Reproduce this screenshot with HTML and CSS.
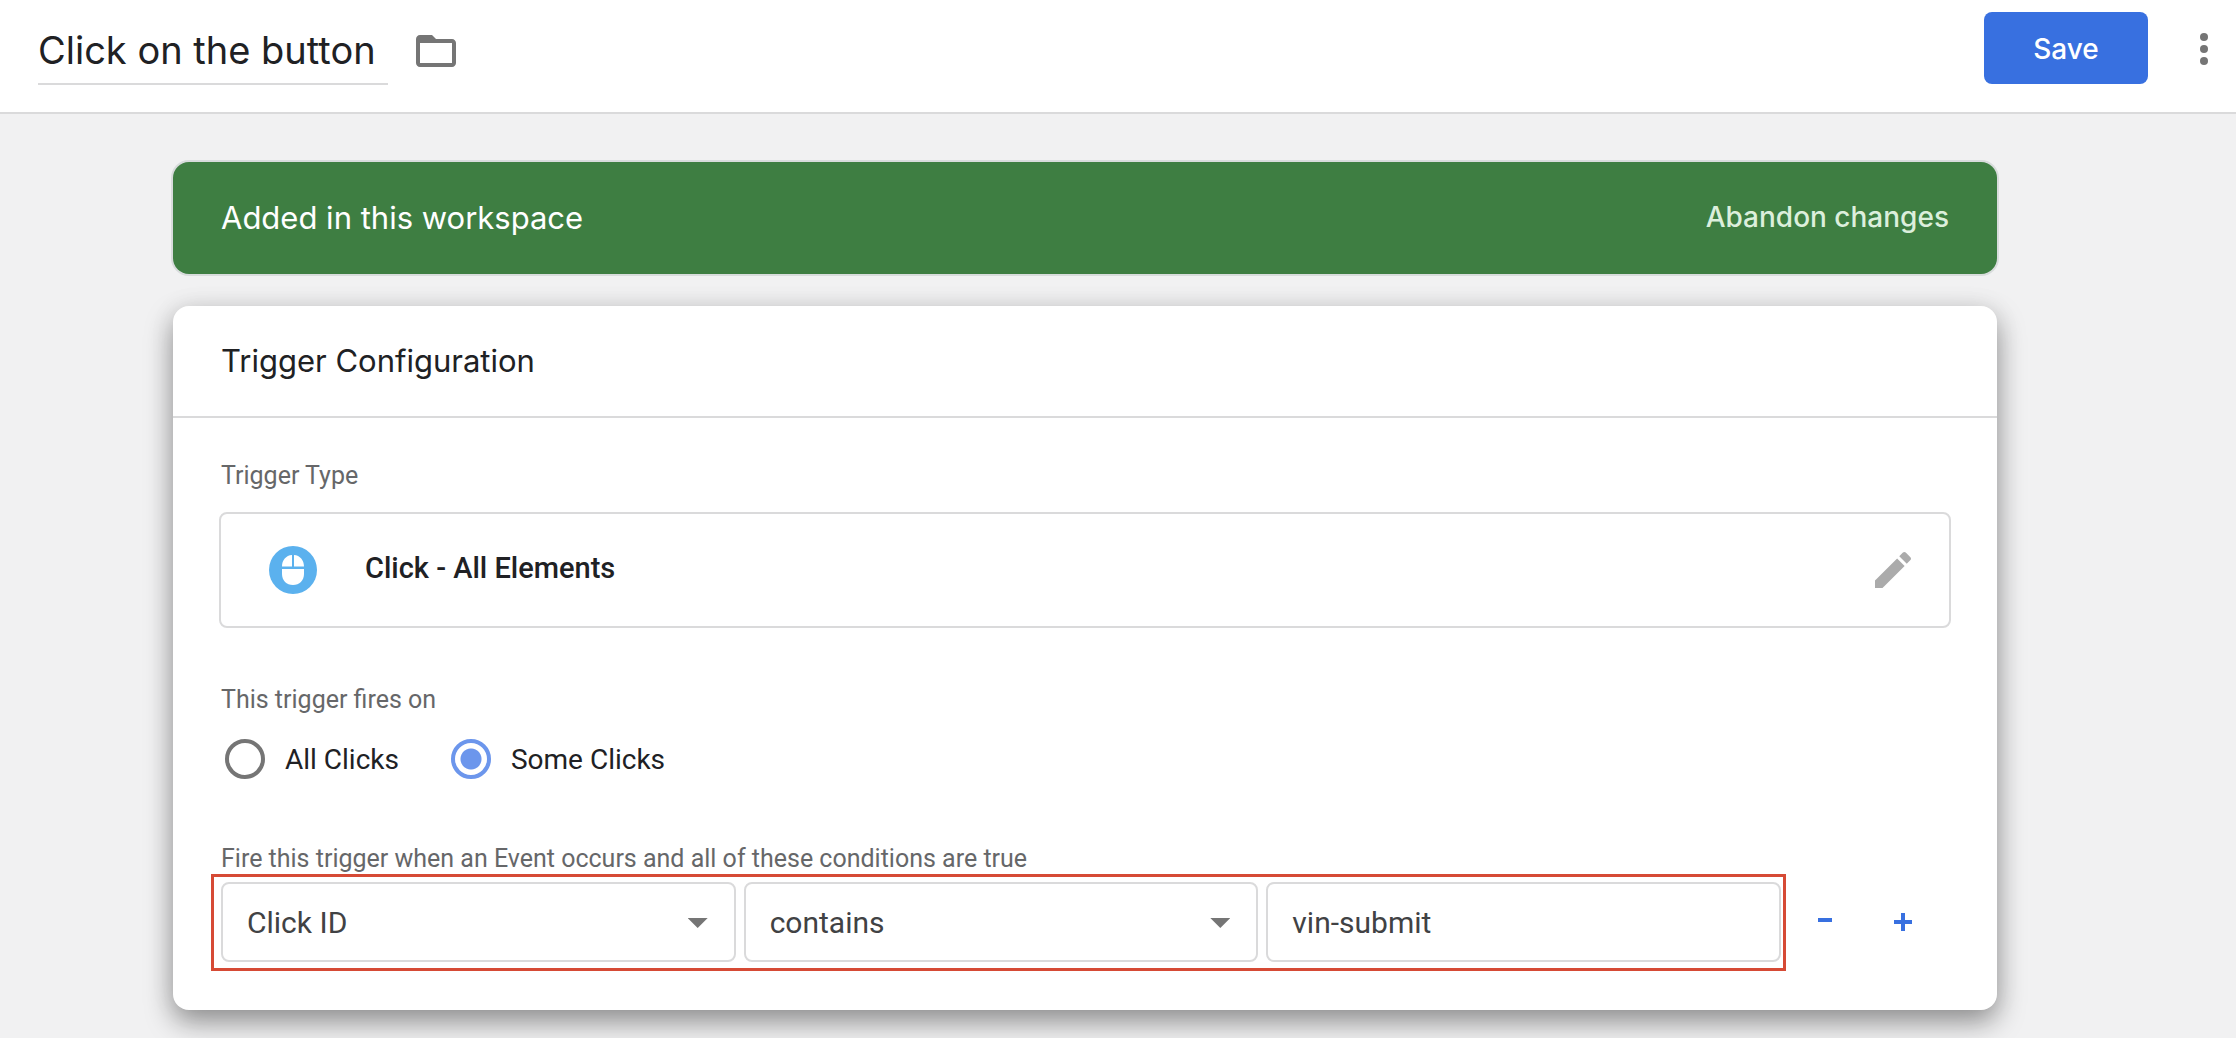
FILE: index.html
```html
<!DOCTYPE html>
<html lang="en">
<head>
<meta charset="utf-8">
<title>Click on the button</title>
<link rel="stylesheet" href="styles.css">
</head>
<body>
<header class="topbar">
  <input class="trigger-name" type="text" value="Click on the button" aria-label="Trigger name">
  <button class="icon-button folder" type="button" aria-label="Folder">
    <svg width="48" height="48" viewBox="0 0 24 24" fill="#757575"><path d="M20 6h-8l-2-2H4c-1.100 0-1.990.9-1.990 2L2 18c0 1.100.9 2 2 2h16c1.100 0 2-.9 2-2V8c0-1.100-.9-2-2-2zm0 12H4V8h16v10z"/></svg>
  </button>
  <button class="save" type="button">Save</button>
  <button class="icon-button" type="button" aria-label="More actions">
    <svg width="48" height="48" viewBox="0 0 24 24" fill="#757575"><circle cx="12" cy="6" r="2"/><circle cx="12" cy="12" r="2"/><circle cx="12" cy="18" r="2"/></svg>
  </button>
</header>
<main class="content">
  <div class="banner">
    <span class="banner-text">Added in this workspace</span>
    <button class="abandon" type="button">Abandon changes</button>
  </div>
  <section class="card">
    <h2 class="card-title">Trigger Configuration</h2>
    <div class="card-body">
      <p class="label">Trigger Type</p>
      <div class="type-box">
        <svg width="48" height="48" viewBox="0 0 48 48"><circle cx="24" cy="24" r="24" fill="#5bb1ee"/><path fill="#fff" d="M23 9v11.500H13C13 14 17 9.500 23 9zM25 9c6 .5 10 5 10 11.500H25zM13 23h22v5c0 6.500-4.500 11-11 11s-11-4.500-11-11z"/></svg>
        <span class="type-name">Click - All Elements</span>
        <button class="icon-button" type="button" aria-label="Edit trigger type">
          <svg width="48" height="48" viewBox="0 0 24 24" fill="#ababab"><path d="M3 17.250V21h3.750L17.810 9.940l-3.750-3.750L3 17.250zM20.710 7.040c.39-.39.39-1.020 0-1.410l-2.340-2.340c-.39-.39-1.020-.39-1.410 0l-1.830 1.830 3.750 3.750 1.830-1.830z"/></svg>
        </button>
      </div>
      <fieldset class="fires-on">
        <legend class="label">This trigger fires on</legend>
        <div class="radios">
          <label class="radio"><input type="radio" name="fires">All Clicks</label>
          <label class="radio"><input type="radio" name="fires" checked>Some Clicks</label>
        </div>
      </fieldset>
      <p class="label">Fire this trigger when an Event occurs and all of these conditions are true</p>
      <div class="condition">
        <div class="fields">
          <div class="select"><select aria-label="Variable"><option>Click ID</option></select></div>
          <div class="select"><select aria-label="Operator"><option>contains</option></select></div>
          <input class="value" type="text" value="vin-submit" aria-label="Value">
        </div>
        <button class="adjust" type="button" aria-label="Remove condition">
          <svg width="20" height="20" viewBox="0 0 20 20" fill="#3870e0"><path d="M3 5h14v4H3z"/></svg>
        </button>
        <button class="adjust" type="button" aria-label="Add condition">
          <svg width="20" height="20" viewBox="0 0 20 20" fill="#3870e0"><path d="M8 0h4v7h7v4h-7v7H8v-7H1V7h7z"/></svg>
        </button>
      </div>
    </div>
  </section>
</main>
</body>
</html>
```
FILE: styles.css
```css
* {
  box-sizing: border-box;
}

body {
  margin: 0;
  background: #f1f1f2;
  color: #202124;
  font-family: Roboto, "Liberation Sans", sans-serif;
  font-size: 28px;
}

button,
input,
select {
  margin: 0;
  padding: 0;
  border: 0;
  background: none;
  color: inherit;
  font: inherit;
}

svg {
  display: block;
}

.topbar {
  display: flex;
  align-items: flex-start;
  height: 114px;
  padding: 12px 8px 0 38px;
  border-bottom: 2px solid #dadadb;
  background: #fff;
}

.trigger-name {
  width: 350px;
  height: 73px;
  padding-top: 4px;
  border-bottom: 2px solid #dadadb;
  font-family: Inter, sans-serif;
  font-size: 38px;
}

.icon-button {
  width: 48px;
  height: 48px;
}

.topbar .icon-button {
  margin-top: 13px;
}

.topbar .folder {
  margin-top: 15px;
  margin-left: 24px;
}

.save {
  width: 164px;
  height: 72px;
  margin-right: 32px;
  margin-left: auto;
  padding-top: 2px;
  border-radius: 8px;
  background: #3870e0;
  color: #fff;
  font-family: Inter, sans-serif;
  font-weight: 500;
}

.content {
  padding: 48px 239px 28px 173px;
}

.banner {
  display: flex;
  align-items: center;
  justify-content: space-between;
  height: 112px;
  padding: 0 48px 2px;
  border-radius: 16px;
  background: #3e7e42;
  box-shadow: 0 0 0 2px #d8dcdc;
}

.banner-text {
  color: #fff;
  font-family: Inter, sans-serif;
  font-size: 31px;
}

.abandon {
  color: #dcefdc;
  font-family: Inter, sans-serif;
  font-weight: 500;
}

.card {
  margin-top: 32px;
  border-radius: 16px;
  background: #fff;
  box-shadow: 0 12px 28px rgba(0, 0, 0, 0.4), 0 0 28px rgba(0, 0, 0, 0.06);
}

.card-title {
  margin: 0;
  padding: 0 48px;
  border-bottom: 2px solid #dadadb;
  font-family: Inter, sans-serif;
  font-size: 31px;
  font-weight: 400;
  line-height: 110px;
}

.card-body {
  padding: 40px 46px 39px;
}

.label {
  margin: 0;
  padding: 2px 2px 0;
  color: #666769;
  font-size: 25px;
  line-height: 31px;
}

.type-box {
  display: flex;
  align-items: center;
  height: 116px;
  margin-top: 21px;
  padding: 0 32px 0 48px;
  border: 2px solid #dadadb;
  border-radius: 8px;
}

.type-name {
  flex: 1;
  padding: 0 0 4px 48px;
  font-size: 29px;
  font-weight: 500;
}

.fires-on {
  margin: 54px 0 62px;
  padding: 0;
  border: 0;
}

.radios {
  display: flex;
  gap: 52px;
  margin-top: 24px;
  padding-left: 6px;
}

.radio {
  display: flex;
  align-items: center;
  gap: 20px;
}

.radio input {
  width: 40px;
  height: 40px;
  border: 4px solid #757575;
  border-radius: 50%;
  appearance: none;
}

.radio input:checked {
  border-color: #6c96ec;
  background: radial-gradient(circle, #6c96ec 10px, transparent 11px);
}

.condition {
  display: flex;
  align-items: center;
  margin-left: -8px;
  padding-right: 9px;
}

.fields {
  display: grid;
  flex: 1;
  grid-template-columns: repeat(3, 1fr);
  gap: 8px;
  padding: 5px 2px 6px 7px;
  border: 3px solid #d64a35;
}

.select {
  position: relative;
}

.select::after {
  position: absolute;
  top: 36px;
  right: 28px;
  width: 20px;
  height: 10px;
  background: #757575;
  clip-path: polygon(0 0, 100% 0, 50% 100%);
  content: "";
  pointer-events: none;
}

.select select,
.value {
  display: block;
  width: 100%;
  height: 80px;
  padding: 0 24px;
  border: 2px solid #dadadb;
  border-radius: 8px;
  color: #414244;
  font-size: 30px;
  appearance: none;
}

.adjust {
  display: grid;
  place-items: center;
  width: 78px;
  height: 80px;
}
```
